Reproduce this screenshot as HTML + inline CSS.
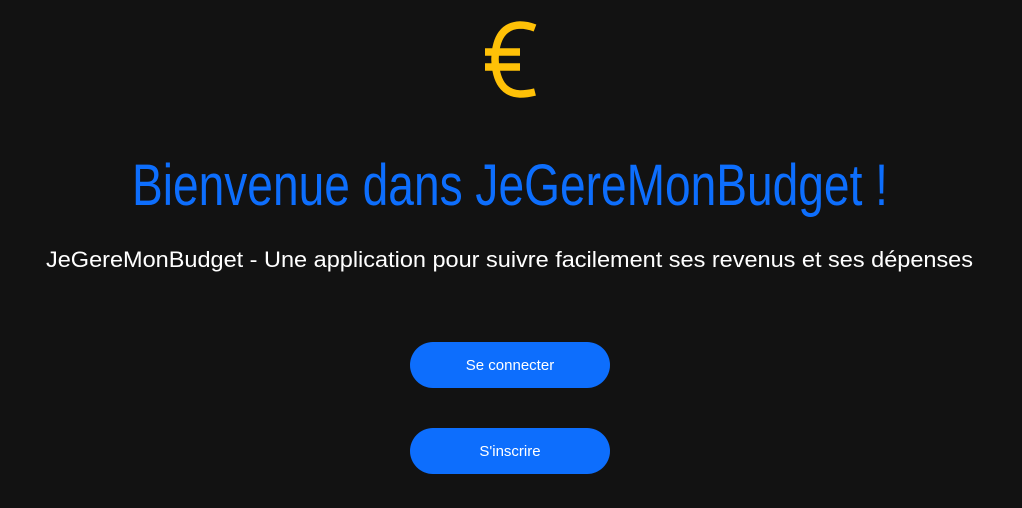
<!DOCTYPE html>
<html><head><meta charset="utf-8"><style>
html,body{margin:0;padding:0;background:#121212;width:1022px;height:508px;overflow:hidden;font-family:"Liberation Sans",sans-serif}
.btn{position:absolute;left:410px;width:200px;height:46px;border-radius:23px;background:#0d6efd;color:#fff;font-size:15px;line-height:48px;text-align:center}
svg{position:absolute;left:0;top:0}
</style></head><body>
<svg width="1022" height="508">
<g fill="none" stroke="#ffc107" stroke-width="7.5">
<path d="M535 28 Q527 25 520 25 Q496 26 495 59 Q496 93 520 94 Q527 94 535 92"/>
<path d="M485 52 H520 M485 67 H520"/>
</g>
<text x="132" y="205" fill="#0d6efd" font-family="Liberation Sans" font-size="58" textLength="756" lengthAdjust="spacingAndGlyphs">Bienvenue dans JeGereMonBudget !</text>
<text x="46" y="267" fill="#ffffff" font-family="Liberation Sans" font-size="22" textLength="927" lengthAdjust="spacingAndGlyphs">JeGereMonBudget - Une application pour suivre facilement ses revenus et ses dépenses</text>
</svg>
<div class="btn" style="top:342px">Se connecter</div>
<div class="btn" style="top:428px">S'inscrire</div>
</body></html>
